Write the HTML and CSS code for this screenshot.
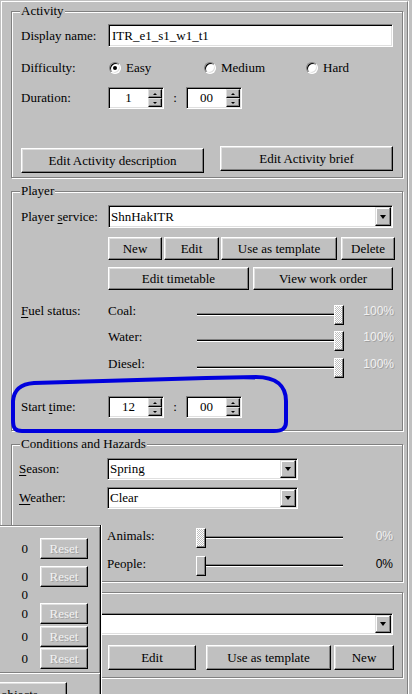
FILE: index.html
```html
<!DOCTYPE html>
<html lang="en">

<head>
  <meta charset="UTF-8">
  <meta name="viewport" content="width=device-width, initial-scale=1.0">
  <title>Activity properties</title>
  <link rel="stylesheet" href="styles.css">
</head>

<body>
  <div class="page">

    <section class="group g-activity">
      <span class="group-title">Activity</span>
      <div class="row r-name">
        <span class="label">Display name:</span>
        <div class="field field-name">ITR_e1_s1_w1_t1</div>
      </div>
      <div class="row r-difficulty">
        <span class="label">Difficulty:</span>
        <span class="option opt-easy"><span class="radio on"></span>Easy</span>
        <span class="option opt-medium"><span class="radio"></span>Medium</span>
        <span class="option"><span class="radio"></span>Hard</span>
      </div>
      <div class="row r-duration">
        <span class="label">Duration:</span>
        <div class="field spin">
          <span class="spin-value">1</span>
          <span class="spin-btns"><span class="spin-up"></span><span class="spin-down"></span></span>
        </div>
        <span class="colon">:</span>
        <div class="field spin">
          <span class="spin-value">00</span>
          <span class="spin-btns"><span class="spin-up"></span><span class="spin-down"></span></span>
        </div>
      </div>
      <div class="row r-edit">
        <button class="btn btn-desc">Edit Activity description</button>
        <button class="btn btn-brief">Edit Activity brief</button>
      </div>
    </section>

    <section class="group g-player">
      <span class="group-title">Player</span>
      <div class="row r-service">
        <span class="label">Player <u>s</u>ervice:</span>
        <div class="field combo combo-service">
          <span class="combo-text">ShnHakITR</span>
          <span class="combo-btn"></span>
        </div>
      </div>
      <div class="row r-tools">
        <button class="btn b-new">New</button>
        <button class="btn b-edit">Edit</button>
        <button class="btn b-template">Use as template</button>
        <button class="btn b-delete">Delete</button>
      </div>
      <div class="row r-timetable">
        <button class="btn b-timetable">Edit timetable</button>
        <button class="btn b-order">View work order</button>
      </div>
      <div class="row fuel r-coal">
        <span class="label"><u>F</u>uel status:</span>
        <span class="sub">Coal:</span>
        <div class="slider"><div class="track"></div><span class="thumb dim at-max"></span></div>
        <span class="pct off">100%</span>
      </div>
      <div class="row fuel r-water">
        <span class="label"></span>
        <span class="sub">Water:</span>
        <div class="slider"><div class="track"></div><span class="thumb dim at-max"></span></div>
        <span class="pct off">100%</span>
      </div>
      <div class="row fuel r-diesel">
        <span class="label"></span>
        <span class="sub">Diesel:</span>
        <div class="slider"><div class="track"></div><span class="thumb dim at-max"></span></div>
        <span class="pct off">100%</span>
      </div>
      <div class="row r-start">
        <span class="label">Start <u>t</u>ime:</span>
        <div class="field spin">
          <span class="spin-value">12</span>
          <span class="spin-btns"><span class="spin-up"></span><span class="spin-down"></span></span>
        </div>
        <span class="colon">:</span>
        <div class="field spin">
          <span class="spin-value">00</span>
          <span class="spin-btns"><span class="spin-up"></span><span class="spin-down"></span></span>
        </div>
      </div>
    </section>

    <section class="group g-conditions">
      <span class="group-title">Conditions and Hazards</span>
      <div class="row r-season">
        <span class="label"><u>S</u>eason:</span>
        <div class="field combo combo-short">
          <span class="combo-text">Spring</span>
          <span class="combo-btn"></span>
        </div>
      </div>
      <div class="row r-weather">
        <span class="label"><u>W</u>eather:</span>
        <div class="field combo combo-short">
          <span class="combo-text">Clear</span>
          <span class="combo-btn"></span>
        </div>
      </div>
      <div class="row fuel hazard r-animals">
        <span class="label"></span>
        <span class="sub">Animals:</span>
        <div class="slider"><div class="track"></div><span class="thumb dim"></span></div>
        <span class="pct off">0%</span>
      </div>
      <div class="row fuel hazard r-people">
        <span class="label"></span>
        <span class="sub">People:</span>
        <div class="slider"><div class="track"></div><span class="thumb"></span></div>
        <span class="pct">0%</span>
      </div>
    </section>

    <section class="group g-objects">
      <div class="row r-pick">
        <div class="field combo combo-wide">
          <span class="combo-text"></span>
          <span class="combo-btn"></span>
        </div>
      </div>
      <div class="row r-actions">
        <button class="btn o-edit">Edit</button>
        <button class="btn o-template">Use as template</button>
        <button class="btn o-new">New</button>
      </div>
    </section>

  </div>

  <!-- pen stroke round the start time row -->
  <svg class="mark" width="412" height="694" viewBox="0 0 412 694">
    <path d="M13 401 C14 390 20 384 34 383 L206 378 L256 377 C276 377 286 386 286 401 L286 422 C286 429 282 431 274 431 L22 431 C15 431 13 428 13 420 Z" />
  </svg>

  <div class="popup">
    <div class="counters">
      <div class="counter c1"><span class="count">0</span><button class="btn reset">Reset</button></div>
      <div class="counter c2"><span class="count">0</span><button class="btn reset">Reset</button></div>
      <div class="counter c3"><span class="count">0</span></div>
      <div class="counter"><span class="count">0</span><button class="btn reset">Reset</button></div>
      <div class="counter c5"><span class="count">0</span><button class="btn reset">Reset</button></div>
      <div class="counter c6"><span class="count">0</span><button class="btn reset">Reset</button></div>
    </div>
    <button class="btn objects-btn">objects</button>
  </div>
</body>

</html>
```

FILE: styles.css
```css
body {
  margin: 0;
  width: 412px;
  height: 694px;
  overflow: hidden;
  position: relative;
  background: #c0c0c0;
  color: #000;
  font: 13px/16px "Liberation Serif", "Times New Roman", serif;
}

u {
  text-decoration-thickness: 1px;
  text-underline-offset: 2px;
}

.page {
  margin: 1px 0 0 1px;
  padding-top: 9px;
  width: 405px;
  height: 700px;
  border-left: 1px solid #fff;
  border-top: 1px solid #fff;
  border-right: 1px solid #808080;
  box-shadow: 1px 0 #fff;
}

/* etched group boxes */
.group {
  position: relative;
  box-sizing: border-box;
  margin-left: 9px;
  width: 392px;
  border: 1px solid #808080;
  box-shadow: inset 1px 1px #fff, 1px 1px #fff;
}

.group-title {
  position: absolute;
  top: -9px;
  left: 8px;
  padding: 0 1px;
  background: #c0c0c0;
}

.g-activity { height: 167px; }
.g-player { margin-top: 13px; height: 240px; }
.g-conditions { margin-top: 13px; height: 138px; }
.g-objects { margin-top: 10px; height: 86px; }

.row {
  display: flex;
  align-items: center;
}

.label {
  flex: none;
  width: 87px;
  padding-left: 9px;
  white-space: nowrap;
}

.g-conditions .label {
  width: 88px;
  padding-left: 7px;
}

/* row spacing */
.r-name { margin-top: 12px; height: 23px; }
.r-difficulty { margin-top: 13px; height: 16px; }
.r-duration { margin-top: 11px; height: 22px; }
.r-edit { margin-top: 37px; height: 27px; align-items: flex-start; padding-left: 9px; }

.r-service { margin-top: 13px; height: 23px; }
.r-tools { margin-top: 9px; height: 23px; padding-left: 96px; }
.r-timetable { margin-top: 7px; height: 23px; padding-left: 96px; }
.r-coal { margin-top: 13px; height: 26px; }
.r-water { height: 27px; }
.r-diesel { height: 26px; }
.r-start { margin-top: 14px; height: 22px; }

.r-season { margin-top: 13px; height: 22px; }
.r-weather { margin-top: 7px; height: 22px; }
.r-animals { margin-top: 19px; height: 28px; }
.r-people { height: 24px; }

.r-pick { margin-top: 20px; height: 22px; padding-left: 9px; }
.r-actions { margin-top: 10px; height: 25px; padding-left: 96px; }

/* sunken white fields */
.field {
  box-sizing: border-box;
  height: 100%;
  background: #fff;
  border: 1px solid;
  border-color: #808080 #fff #fff #808080;
  box-shadow: inset 1px 1px #000, inset -1px -1px #dfdfdf;
}

.field-name {
  width: 285px;
  padding-left: 3px;
  display: flex;
  align-items: center;
}

/* radio buttons */
.option {
  display: flex;
  align-items: center;
}

.opt-easy { width: 95px; }
.opt-medium { width: 102px; }

.radio {
  position: relative;
  box-sizing: border-box;
  width: 12px;
  height: 12px;
  margin: 0 5px 0 1px;
  border-radius: 50%;
  background: #fff;
  border: 1px solid;
  border-color: #808080 #fff #fff #808080;
  box-shadow: inset 1px 1px #000, inset -1px -1px #dfdfdf;
}

.radio.on::after {
  content: '';
  position: absolute;
  left: 3px;
  top: 3px;
  width: 4px;
  height: 4px;
  border-radius: 50%;
  background: #000;
}

/* spin boxes */
.spin {
  width: 56px;
  display: flex;
  flex: none;
}

.spin-value {
  flex: 1;
  text-align: center;
  align-self: center;
}

.spin-btns {
  display: flex;
  flex-direction: column;
  width: 14px;
  margin: 1px 1px 1px 0;
}

.spin-up,
.spin-down {
  flex: 1;
  display: flex;
  align-items: center;
  justify-content: center;
  box-sizing: border-box;
  background: #c0c0c0;
  border: 1px solid;
  border-color: #dfdfdf #000 #000 #dfdfdf;
  box-shadow: inset -1px -1px #808080;
}

.spin-up::after,
.spin-down::after {
  content: '';
  border-left: 2px solid transparent;
  border-right: 2px solid transparent;
}

.spin-up::after { border-bottom: 2px solid #000; }
.spin-down::after { border-top: 2px solid #000; }

.colon {
  width: 22px;
  text-align: center;
}

/* drop-down lists */
.combo {
  display: flex;
}

.combo-service { width: 285px; }
.combo-short { width: 191px; }
.combo-wide { width: 372px; }

.combo-text {
  flex: 1;
  padding-left: 2px;
  align-self: center;
}

.combo-btn {
  display: flex;
  align-items: center;
  justify-content: center;
  box-sizing: border-box;
  width: 16px;
  margin: 1px;
  background: #c0c0c0;
  border: 1px solid;
  border-color: #dfdfdf #000 #000 #dfdfdf;
  box-shadow: inset -1px -1px #808080, inset 1px 1px #fff;
}

.combo-btn::after {
  content: '';
  border-left: 3px solid transparent;
  border-right: 3px solid transparent;
  border-top: 4px solid #000;
}

/* push buttons */
.btn {
  flex: none;
  box-sizing: border-box;
  height: 23px;
  padding: 0;
  font: inherit;
  color: #000;
  background: #c0c0c0;
  border: 1px solid;
  border-color: #fff #000 #000 #fff;
  box-shadow: inset -1px -1px #808080, inset 1px 1px #dfdfdf;
}

.btn-desc { width: 183px; height: 25px; margin-top: 2px; }
.btn-brief { width: 173px; height: 25px; margin-left: 16px; }

.b-new { width: 54px; }
.b-edit { width: 55px; margin-left: 2px; }
.b-template { width: 116px; margin-left: 2px; }
.b-delete { width: 54px; margin-left: 4px; }
.b-timetable { width: 141px; }
.b-order { width: 140px; margin-left: 4px; }

.o-edit { width: 88px; height: 25px; }
.o-template { width: 125px; height: 25px; margin-left: 10px; }
.o-new { width: 60px; height: 25px; margin-left: 3px; }

/* sliders */
.fuel {
  align-items: flex-start;
}

.sub {
  flex: none;
  width: 89px;
}

.slider {
  position: relative;
  flex: none;
  width: 147px;
  height: 20px;
  margin-top: 2px;
}

.hazard .slider {
  margin-top: 0;
}

.track {
  margin-top: 8px;
  height: 1px;
  background: #000;
  border-top: 1px solid #808080;
  border-bottom: 1px solid #fff;
}

.thumb {
  position: absolute;
  top: 0;
  left: 0;
  box-sizing: border-box;
  width: 10px;
  height: 20px;
  background: #c0c0c0;
  border: 1px solid;
  border-color: #fff #000 #000 #fff;
  box-shadow: inset -1px -1px #808080;
}

.thumb.at-max {
  left: auto;
  right: 0;
}

.thumb.dim {
  background: conic-gradient(#fff 25%, #c0c0c0 0 50%, #fff 0 75%, #c0c0c0 0) 0 0 / 2px 2px;
}

.pct {
  width: 50px;
  text-align: right;
  font: 12px/16px "Liberation Sans", Arial, sans-serif;
}

.off,
.reset {
  color: #f2f2f2;
  text-shadow: 1px 1px 0 #a0a0a0;
}

/* pen mark */
.mark {
  position: absolute;
  left: 0;
  top: 0;
  pointer-events: none;
}

.mark path {
  fill: none;
  stroke: #0000dd;
  stroke-width: 4;
  stroke-linecap: round;
  stroke-linejoin: round;
}

/* counters window lying over the lower left corner */
.popup {
  position: absolute;
  left: 0;
  top: 525px;
  width: 100px;
  height: 169px;
  background: #c0c0c0;
  border-right: 1px solid #000;
  box-shadow: inset -1px 0 #808080, 1px 0 #fff;
}

.counters {
  box-sizing: border-box;
  height: 148px;
  border-top: 1px solid #808080;
  border-bottom: 1px solid #808080;
  box-shadow: inset 0 1px #fff, 0 1px #fff;
}

.counter {
  display: flex;
  align-items: center;
  height: 21px;
}

.c1 { margin-top: 12px; }
.c2 { margin-top: 7px; }
.c3 { height: 16px; }
.c5 { margin-top: 2px; }
.c6 { margin-top: 1px; }

.count {
  width: 28px;
  text-align: right;
}

.reset {
  width: 48px;
  height: 21px;
  margin-left: 12px;
}

.objects-btn {
  display: block;
  margin: 9px 0 0 -30px;
  width: 97px;
  height: 24px;
  padding: 2px 0 0 30px;
  text-align: left;
  line-height: 16px;
  vertical-align: top;
}
```
